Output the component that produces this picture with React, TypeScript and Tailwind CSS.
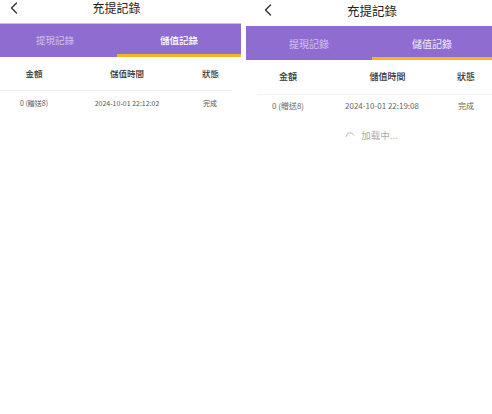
const font = { fontFamily: '"Noto Sans CJK TC", "Noto Sans", sans-serif' };

function BackArrow() {
  return (
    <svg className="w-[10px] h-[12px] text-[#333]" viewBox="0 0 10 12" fill="none" stroke="currentColor">
      <path d="M7.5 1L2.5 6l5 5" strokeWidth={1.4} strokeLinecap="round" strokeLinejoin="round" />
    </svg>
  );
}

function Spinner() {
  return (
    <svg className="w-[10px] h-[10px]" viewBox="0 0 10 10" fill="none">
      <path d="M1.2 6.5A4 4 0 0 1 8.8 5" stroke="#bbb" strokeWidth={1} strokeLinecap="round" />
    </svg>
  );
}

export default function App() {
  return (
    <div className="w-[492px] h-[414px] bg-white flex gap-[5px] overflow-hidden" style={font}>
      {/* Left screen */}
      <div className="w-[241px] flex flex-col">
        <div className="h-[23px] flex items-center relative">
          <div className="absolute left-[9px] top-[2px]">
            <BackArrow />
          </div>
          <h1 className="flex-1 text-center text-[12px] text-[#222] leading-none -mt-[7px] pr-[8px]">充提記錄</h1>
        </div>
        <div className="h-[34px] bg-[#8f6ccf] border-t border-[#cbc2d9] flex">
          <div className="w-[117px] flex items-center justify-center text-[9.5px] text-white/60 pr-[7px]">提現記錄</div>
          <div className="flex-1 flex items-center justify-center text-[9.5px] text-white font-medium border-b-[3px] border-[#f2b81c] pt-[3px]">
            儲值記錄
          </div>
        </div>
        <div className="grid grid-cols-[68px_118px_1fr] h-[34px] items-center mr-[9px] border-b border-[#f0f0f0] text-[8.5px] text-[#333] font-medium">
          <div className="text-center">金額</div>
          <div className="text-center">儲值時間</div>
          <div className="text-center pl-[3px]">狀態</div>
        </div>
        <div className="grid grid-cols-[68px_118px_1fr] h-[24px] items-center text-[7px] text-[#555]">
          <div className="text-center">0 (贈送8)</div>
          <div className="text-center">2024-10-01 22:12:02</div>
          <div className="text-center pr-[7px]">完成</div>
        </div>
      </div>

      {/* Right screen */}
      <div className="w-[246px] flex flex-col">
        <div className="h-[26px] flex items-center relative">
          <div className="absolute left-[17px] top-[4px]">
            <BackArrow />
          </div>
          <h1 className="flex-1 text-center text-[12.5px] text-[#222] leading-none -mt-[4px] pl-[6px]">充提記錄</h1>
        </div>
        <div className="h-[34px] bg-[#8f6ccf] flex">
          <div className="w-[126px] flex items-center justify-center text-[10px] text-white/60">提現記錄</div>
          <div className="flex-1 flex items-center justify-center text-[10px] text-white/90 border-b-[3px] border-[#f2b81c] pt-[3px]">
            儲值記錄
          </div>
        </div>
        <div className="grid grid-cols-[84px_104px_1fr] h-[35px] items-center ml-[11px] border-b border-[#f0f0f0] text-[9px] text-[#333] font-medium">
          <div className="text-center -ml-[22px]">金額</div>
          <div className="text-center -ml-[11px]">儲值時間</div>
          <div className="text-center pl-[6px] -ml-[11px]">狀態</div>
        </div>
        <div className="grid grid-cols-[84px_104px_1fr] h-[22px] items-center text-[8px] text-[#666]">
          <div className="text-center">0 (贈送8)</div>
          <div className="text-center">2024-10-01 22:19:08</div>
          <div className="text-center pl-[6px]">完成</div>
        </div>
        <div className="flex items-center justify-center gap-[6px] h-[36px] text-[9.5px] text-[#aaa] pl-[5px]">
          <Spinner />
          <span>加载中...</span>
        </div>
      </div>
    </div>
  );
}
